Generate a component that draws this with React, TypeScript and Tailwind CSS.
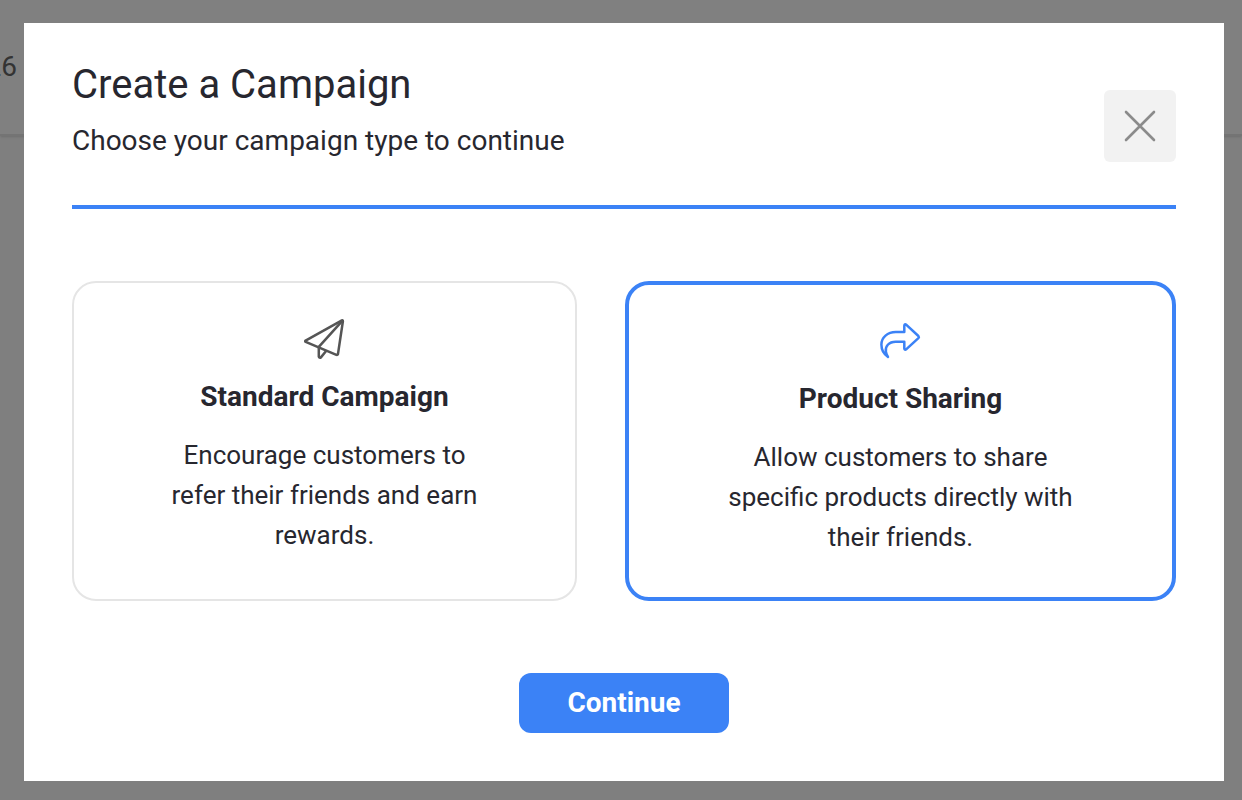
import { useState } from "react";
import type { ReactNode } from "react";

function PlaneIcon() {
  return (
    <svg width="42" height="42" viewBox="0 0 42 42" fill="none" stroke="#555555" strokeWidth="2.5" strokeLinecap="round" strokeLinejoin="round" aria-hidden="true">
      <path d="M37.9 1.4 L1.6 21.6 Q0.7 22.3 1.7 22.9 L32.4 35.8 Q33.7 36.2 34 34.9 L38.9 2.3 Q38.9 1.1 37.9 1.4 Z" />
      <path d="M38.3 1.8 L14.8 27.9 V37.6 Q15.4 39.4 16.9 38.4 L21.9 32.2" />
    </svg>
  );
}

function ShareIcon() {
  return (
    <svg width="42" height="42" viewBox="0 0 42 42" fill="none" stroke="#3b82f6" strokeWidth="2.5" strokeLinecap="round" strokeLinejoin="round" aria-hidden="true">
      <path d="M24.3 11.1 V4.8 Q24.5 2.6 26.4 3.8 L38.4 15 Q39.4 16.1 38.4 17.2 L26.4 28.2 Q24.5 29.4 24.3 27.4 V20.7 H15.8 C8.6 20.7 5 25.6 5.9 30.6 C6.3 32.8 7 34.4 8 36 C3.8 33.2 1.4 28.6 1.4 23.6 C1.4 16.4 7.6 11.1 15.8 11.1 Z" />
    </svg>
  );
}

type CardProps = {
  title: string;
  text: string;
  icon: ReactNode;
  selected: boolean;
  onSelect: () => void;
};

function TypeCard({ title, text, icon, selected, onSelect }: CardProps) {
  const border = selected ? "border-4 border-[#3b82f6]" : "border-2 border-[#e5e5e5]";
  return (
    <button
      type="button"
      aria-pressed={selected}
      onClick={onSelect}
      className={`flex min-h-80 flex-col items-center rounded-3xl bg-white px-20 py-9 text-center ${border}`}
    >
      {icon}
      <span className="mt-4 text-[28px] leading-10 font-bold">{title}</span>
      <span className="mt-[18px] max-w-[350px] text-[26px] leading-10">{text}</span>
    </button>
  );
}

export default function App() {
  const [type, setType] = useState("product");
  return (
    <div className="relative min-h-screen overflow-hidden bg-[#7f7f7f] font-['Roboto',sans-serif] text-[#27272f]">
      <div className="absolute inset-x-0 top-0 h-[136px] border-b-2 border-[#747474] bg-[#808080] shadow-sm">
        <span className="absolute top-[47px] right-full -mr-[17px] text-[28px] leading-10 whitespace-nowrap text-[#333333]">2026</span>
      </div>
      <main className="relative mt-[23px] mr-[18px] mb-[19px] ml-6 bg-white px-12 pt-[34px] pb-12" role="dialog" aria-labelledby="dialog-title">
        <header className="flex items-end justify-between border-b-4 border-[#3b82f6] pb-[43px]">
          <div>
            <h1 id="dialog-title" className="text-[40px] leading-[56px]">Create a Campaign</h1>
            <p className="mt-[7px] text-[28px] leading-[42px]">Choose your campaign type to continue</p>
          </div>
          <button type="button" aria-label="Close" className="flex size-[72px] items-center justify-center rounded-md bg-[#f2f2f2]">
            <svg width="32" height="32" viewBox="0 0 32 32" stroke="#8b8b8b" strokeWidth="2.6" strokeLinecap="round" aria-hidden="true">
              <path d="M2 2 L30 30 M30 2 L2 30" />
            </svg>
          </button>
        </header>
        <div className="mt-[72px] grid grid-cols-[505fr_551fr] gap-12">
          <TypeCard
            title="Standard Campaign"
            text="Encourage customers to refer their friends and earn rewards."
            icon={<PlaneIcon />}
            selected={type === "standard"}
            onSelect={() => setType("standard")}
          />
          <TypeCard
            title="Product Sharing"
            text="Allow customers to share specific products directly with their friends."
            icon={<ShareIcon />}
            selected={type === "product"}
            onSelect={() => setType("product")}
          />
        </div>
        <div className="mt-[72px] flex justify-center">
          <button type="button" className="h-[60px] rounded-xl bg-[#3b82f6] px-12 text-[28px] leading-10 font-bold text-white">Continue</button>
        </div>
      </main>
    </div>
  );
}
